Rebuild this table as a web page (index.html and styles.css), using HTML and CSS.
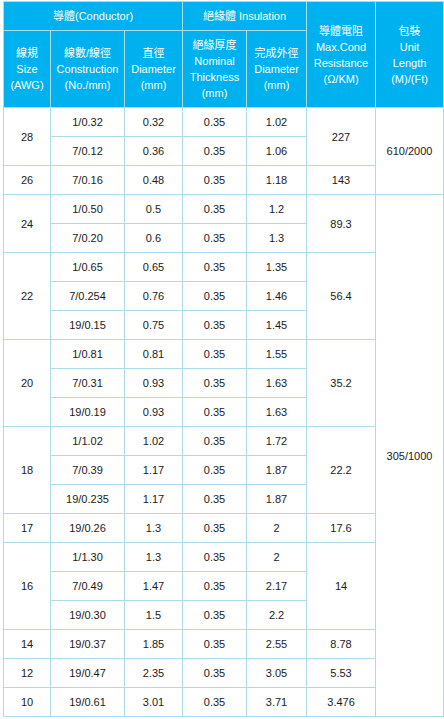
FILE: index.html
```html
<!DOCTYPE html>
<html>
<head>
<meta charset="utf-8">
<link rel="stylesheet" href="styles.css">
</head>
<body>
<table class="spec">
  <colgroup>
    <col class="c1"><col class="c2"><col class="c3"><col class="c4"><col class="c5"><col class="c6"><col class="c7">
  </colgroup>
  <thead>
    <tr class="h1">
      <th colspan="3">導體(Conductor)</th>
      <th colspan="2">絕緣體 Insulation</th>
      <th rowspan="2">導體電阻<br>Max.Cond<br>Resistance<br>(Ω/KM)</th>
      <th rowspan="2">包裝<br>Unit<br>Length<br>(M)/(Ft)</th>
    </tr>
    <tr class="h2">
      <th>線規<br>Size<br>(AWG)</th>
      <th>線數/線徑<br>Construction<br>(No./mm)</th>
      <th>直徑<br>Diameter<br>(mm)</th>
      <th>絕緣厚度<br>Nominal<br>Thickness<br>(mm)</th>
      <th>完成外徑<br>Diameter<br>(mm)</th>
    </tr>
  </thead>
  <tbody>
    <tr><td rowspan="2">28</td><td>1/0.32</td><td>0.32</td><td>0.35</td><td>1.02</td><td rowspan="2">227</td><td rowspan="3">610/2000</td></tr>
    <tr><td>7/0.12</td><td>0.36</td><td>0.35</td><td>1.06</td></tr>
    <tr><td>26</td><td>7/0.16</td><td>0.48</td><td>0.35</td><td>1.18</td><td>143</td></tr>
    <tr><td rowspan="2">24</td><td>1/0.50</td><td>0.5</td><td>0.35</td><td>1.2</td><td rowspan="2">89.3</td><td rowspan="18">305/1000</td></tr>
    <tr><td>7/0.20</td><td>0.6</td><td>0.35</td><td>1.3</td></tr>
    <tr><td rowspan="3">22</td><td>1/0.65</td><td>0.65</td><td>0.35</td><td>1.35</td><td rowspan="3">56.4</td></tr>
    <tr><td>7/0.254</td><td>0.76</td><td>0.35</td><td>1.46</td></tr>
    <tr><td>19/0.15</td><td>0.75</td><td>0.35</td><td>1.45</td></tr>
    <tr><td rowspan="3">20</td><td>1/0.81</td><td>0.81</td><td>0.35</td><td>1.55</td><td rowspan="3">35.2</td></tr>
    <tr><td>7/0.31</td><td>0.93</td><td>0.35</td><td>1.63</td></tr>
    <tr><td>19/0.19</td><td>0.93</td><td>0.35</td><td>1.63</td></tr>
    <tr><td rowspan="3">18</td><td>1/1.02</td><td>1.02</td><td>0.35</td><td>1.72</td><td rowspan="3">22.2</td></tr>
    <tr><td>7/0.39</td><td>1.17</td><td>0.35</td><td>1.87</td></tr>
    <tr><td>19/0.235</td><td>1.17</td><td>0.35</td><td>1.87</td></tr>
    <tr><td>17</td><td>19/0.26</td><td>1.3</td><td>0.35</td><td>2</td><td>17.6</td></tr>
    <tr><td rowspan="3">16</td><td>1/1.30</td><td>1.3</td><td>0.35</td><td>2</td><td rowspan="3">14</td></tr>
    <tr><td>7/0.49</td><td>1.47</td><td>0.35</td><td>2.17</td></tr>
    <tr><td>19/0.30</td><td>1.5</td><td>0.35</td><td>2.2</td></tr>
    <tr><td>14</td><td>19/0.37</td><td>1.85</td><td>0.35</td><td>2.55</td><td>8.78</td></tr>
    <tr><td>12</td><td>19/0.47</td><td>2.35</td><td>0.35</td><td>3.05</td><td>5.53</td></tr>
    <tr><td>10</td><td>19/0.61</td><td>3.01</td><td>0.35</td><td>3.71</td><td>3.476</td></tr>
  </tbody>
</table>
</body>
</html>
```
FILE: styles.css
```css
html, body {
  margin: 0;
  padding: 0;
  background: #ffffff;
}
body {
  padding: 1px 0 0 3px;
  font-family: "Liberation Sans", Arial, "Noto Sans CJK TC", sans-serif;
  font-size: 11px;
  color: #1a1a1a;
}
.spec {
  border-collapse: collapse;
  table-layout: fixed;
  width: 440px;
}
.c1 { width: 47px; }
.c2 { width: 74px; }
.c3 { width: 58px; }
.c4 { width: 64px; }
.c5 { width: 60px; }
.c6 { width: 69px; }
.c7 { width: 68px; }
.spec th, .spec td {
  border: 1px solid #acdbe9;
  padding: 0;
  text-align: center;
  vertical-align: middle;
  line-height: 16px;
}
.spec th {
  background: #00b1ef;
  color: #ffffff;
  font-weight: normal;
}
.h1 { height: 29px; }
.h2 { height: 77px; }
.spec tbody tr { height: 29px; }
```
